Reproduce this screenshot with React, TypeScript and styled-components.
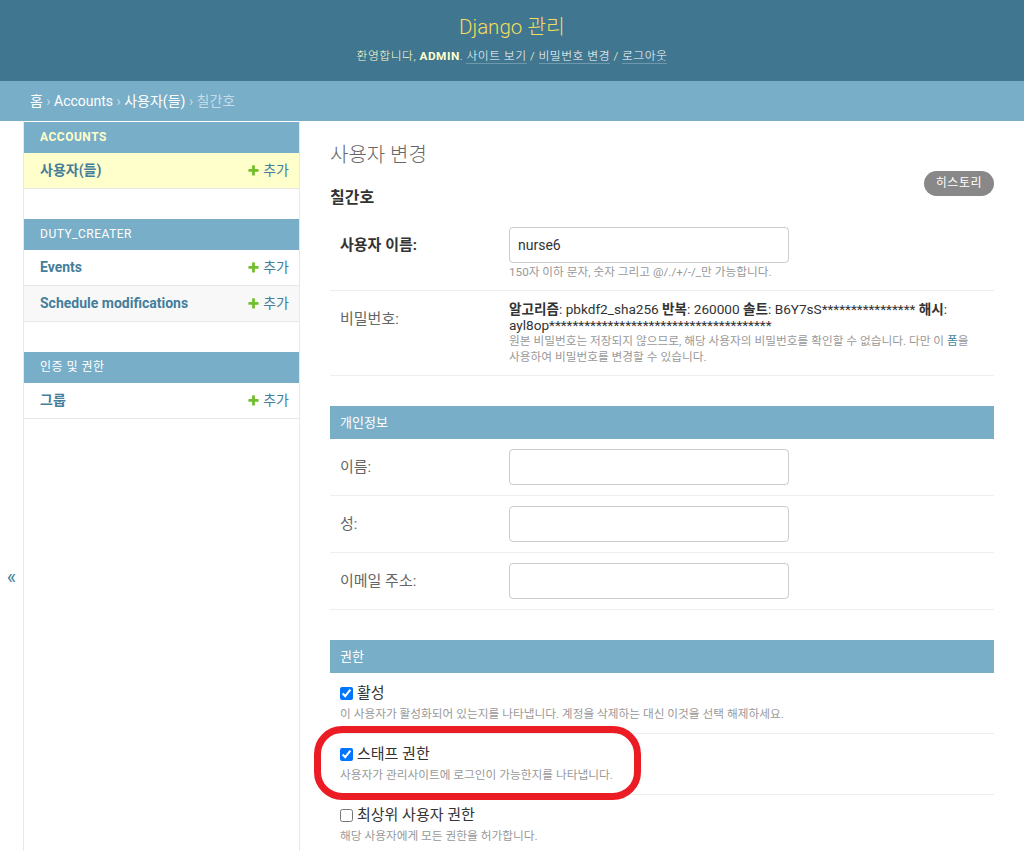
import React from "react";
import styled, { createGlobalStyle, css } from "styled-components";

const GlobalStyle = createGlobalStyle`
  * { box-sizing: border-box; }
  body {
    margin: 0;
    font-family: Roboto, "Noto Sans CJK KR", sans-serif;
    font-size: 14px;
    color: #333;
    background: #fff;
  }
  a { text-decoration: none; }
`;

const Header = styled.header`
  height: 81px;
  background: #417690;
  color: #ffc;
  text-align: center;
  padding: 13px 30px 0;
`;

const SiteName = styled.h1`
  margin: 0;
  height: 28px;
  font-size: 20.5px;
  font-weight: 300;
  line-height: 28px;
  color: #f5dd5d;
`;

const UserTools = styled.div`
  margin-top: 7px;
  height: 16px;
  font-size: 11.8px;
  font-weight: 300;
  line-height: 16px;
  letter-spacing: 0.5px;
  text-transform: uppercase;
  color: #ffc;
  strong { font-weight: 700; }
`;

const ToolLink = styled.a`
  color: #fff;
  border-bottom: 1px solid rgba(255, 255, 255, 0.25);
`;

const Breadcrumbs = styled.nav`
  height: 40px;
  background: #79aec8;
  padding: 10px 30px;
  color: #c4dce8;
  font-size: 14px;
  line-height: 20px;
  a { color: #fff; }
`;

const Main = styled.div`
  display: flex;
  align-items: stretch;
`;

const Toggle = styled.button`
  flex: 0 0 24px;
  display: flex;
  align-items: flex-start;
  justify-content: center;
  padding: 446px 0 0;
  border: 0;
  border-right: 1px solid #e8e8e8;
  background: #fff;
  color: #447e9b;
  font-size: 20px;
  line-height: 20px;
  font-family: Roboto, sans-serif;
`;

const Sidebar = styled.nav`
  flex: 0 0 276px;
  border-right: 1px solid #e8e8e8;
  padding-top: 1px;
`;

const Module = styled.div`
  margin-bottom: 30px;
`;

const Caption = styled.div<{ $current?: boolean }>`
  height: 31px;
  background: #79aec8;
  color: #fff;
  padding: 8px 16px;
  font-size: 12px;
  line-height: 15px;
  letter-spacing: 0.5px;
  text-transform: uppercase;
  ${(p) =>
    p.$current &&
    css`
      color: #ffc;
      font-weight: 700;
    `}
`;

const ModelRow = styled.div<{ $current?: boolean; $alt?: boolean }>`
  display: flex;
  align-items: center;
  justify-content: space-between;
  height: 36px;
  border-bottom: 1px solid #e8e8e8;
  background: ${(p) => (p.$current ? "#ffc" : p.$alt ? "#f8f8f8" : "#fff")};
`;

const ModelName = styled.a`
  padding: 0 16px;
  font-size: 14px;
  line-height: 19px;
  font-weight: 700;
  color: #447e9b;
`;

const AddLink = styled.a`
  display: flex;
  align-items: center;
  gap: 3px;
  padding: 0 10px 0 0;
  font-size: 14px;
  line-height: 19px;
  color: #447e9b;
  svg { flex: 0 0 13px; }
`;

const Content = styled.main`
  flex: 1;
  padding: 22px 30px 0;
  min-width: 0;
`;

const PageTitle = styled.h1`
  margin: 0 0 4px;
  font-size: 20px;
  font-weight: 300;
  line-height: 24px;
  color: #666;
`;

const TitleRow = styled.div`
  display: flex;
  align-items: flex-start;
  justify-content: space-between;
  height: 38px;
`;

const ObjectName = styled.h2`
  margin: 17px 0 0;
  font-size: 16px;
  font-weight: 700;
  line-height: 20px;
  color: #333;
`;

const HistoryButton = styled.a`
  display: block;
  height: 25px;
  padding: 5px 12px;
  background: #888;
  border-radius: 15px;
  color: #fff;
  font-size: 12px;
  line-height: 15px;
  letter-spacing: 0.5px;
`;

const Fieldset = styled.fieldset<{ $first?: boolean }>`
  margin: ${(p) => (p.$first ? "8px 0 0" : "30px 0 0")};
  padding: 0;
  border: 0;
  min-width: 0;
`;

const FieldsetTitle = styled.h2`
  margin: 0;
  height: 33px;
  background: #79aec8;
  color: #fff;
  padding: 8px 10px;
  font-size: 13px;
  font-weight: 400;
  line-height: 17px;
`;

const FormRow = styled.div`
  display: flex;
  padding: 10px;
  border-bottom: 1px solid #eee;
`;

const Label = styled.label<{ $required?: boolean }>`
  flex: 0 0 169px;
  padding-top: 10px;
  font-size: 15px;
  line-height: 16px;
  color: ${(p) => (p.$required ? "#333" : "#666")};
  font-weight: ${(p) => (p.$required ? 700 : 400)};
`;

const Field = styled.div`
  flex: 1;
  min-width: 0;
`;

const TextInput = styled.input`
  display: block;
  width: 280px;
  height: 36px;
  padding: 6px 8px;
  border: 1px solid #ccc;
  border-radius: 4px;
  font-family: Roboto, "Noto Sans CJK KR", sans-serif;
  font-size: 14px;
  color: #333;
  background: #fff;
`;

const Help = styled.div<{ $tight?: boolean }>`
  margin-top: ${(p) => (p.$tight ? "0" : "2px")};
  height: ${(p) => (p.$tight ? "32px" : "15px")};
  font-size: 11.7px;
  line-height: ${(p) => (p.$tight ? "16px" : "15px")};
  color: #999;
  word-break: keep-all;
  a { color: #447e9b; }
`;

const HashValue = styled.div`
  height: 32px;
  font-size: 13.6px;
  line-height: 16px;
  color: #333;
  strong { font-weight: 700; }
`;

const CheckRow = styled.div`
  padding: 10px;
  border-bottom: 1px solid #eee;
`;

const CheckLine = styled.div`
  display: flex;
  align-items: center;
  height: 20px;
`;

const Checkbox = styled.input`
  width: 13px;
  height: 13px;
  margin: 0 4px 0 0;
`;

const CheckLabel = styled.label`
  font-size: 15px;
  line-height: 20px;
  color: #333;
`;

const CheckHelp = styled.div`
  margin-top: 3px;
  height: 17px;
  font-size: 11.7px;
  line-height: 17px;
  color: #999;
`;

const Annotated = styled.div`
  position: relative;
`;

const Highlight = styled.div`
  position: absolute;
  left: -16px;
  top: -8px;
  width: 327px;
  height: 74px;
  border: 7px solid #ec1c24;
  border-radius: 28px;
  pointer-events: none;
`;

const PlusIcon = () => (
  <svg width="13" height="13" viewBox="0 0 1792 1792" aria-hidden="true">
    <path
      fill="#70bf2b"
      d="M1600 796v192q0 40-28 68t-68 28h-416v416q0 40-28 68t-68 28h-192q-40 0-68-28t-28-68v-416h-416q-40 0-68-28t-28-68v-192q0-40 28-68t68-28h416v-416q0-40 28-68t68-28h192q40 0 68 28t28 68v416h416q40 0 68 28t28 68z"
    />
  </svg>
);

type ModelItem = { name: string; current?: boolean };
type AppModule = { app: string; current?: boolean; models: ModelItem[] };

const apps: AppModule[] = [
  { app: "Accounts", current: true, models: [{ name: "사용자(들)", current: true }] },
  { app: "Duty_creater", models: [{ name: "Events" }, { name: "Schedule modifications" }] },
  { app: "인증 및 권한", models: [{ name: "그룹" }] },
];

const checks = [
  { label: "활성", help: "이 사용자가 활성화되어 있는지를 나타냅니다. 계정을 삭제하는 대신 이것을 선택 해제하세요.", checked: true },
  { label: "스태프 권한", help: "사용자가 관리사이트에 로그인이 가능한지를 나타냅니다.", checked: true, highlight: true },
  { label: "최상위 사용자 권한", help: "해당 사용자에게 모든 권한을 허가합니다.", checked: false },
];

export default function App() {
  return (
    <>
      <GlobalStyle />
      <Header>
        <SiteName>Django 관리</SiteName>
        <UserTools>
          환영합니다, <strong>admin</strong>. <ToolLink href="#">사이트 보기</ToolLink> /{" "}
          <ToolLink href="#">비밀번호 변경</ToolLink> / <ToolLink href="#">로그아웃</ToolLink>
        </UserTools>
      </Header>
      <Breadcrumbs>
        <a href="#">홈</a> › <a href="#">Accounts</a> › <a href="#">사용자(들)</a> › 칠간호
      </Breadcrumbs>
      <Main>
        <Toggle aria-label="사이드바 전환">«</Toggle>
        <Sidebar>
          {apps.map((a) => (
            <Module key={a.app}>
              <Caption $current={a.current}>{a.app}</Caption>
              {a.models.map((m, i) => (
                <ModelRow key={m.name} $current={m.current} $alt={i % 2 === 1}>
                  <ModelName href="#">{m.name}</ModelName>
                  <AddLink href="#">
                    <PlusIcon />
                    추가
                  </AddLink>
                </ModelRow>
              ))}
            </Module>
          ))}
        </Sidebar>
        <Content>
          <PageTitle>사용자 변경</PageTitle>
          <TitleRow>
            <ObjectName>칠간호</ObjectName>
            <HistoryButton href="#">히스토리</HistoryButton>
          </TitleRow>
          <form>
            <Fieldset $first>
              <FormRow>
                <Label $required htmlFor="id_username">사용자 이름:</Label>
                <Field>
                  <TextInput id="id_username" type="text" defaultValue="nurse6" />
                  <Help>150자 이하 문자, 숫자 그리고 @/./+/-/_만 가능합니다.</Help>
                </Field>
              </FormRow>
              <FormRow>
                <Label>비밀번호:</Label>
                <Field>
                  <HashValue>
                    <strong>알고리즘</strong>: pbkdf2_sha256 <strong>반복</strong>: 260000{" "}
                    <strong>솔트</strong>: B6Y7sS**************** <strong>해시</strong>:
                    ayl8op**************************************
                  </HashValue>
                  <Help $tight>
                    원본 비밀번호는 저장되지 않으므로, 해당 사용자의 비밀번호를 확인할 수 없습니다. 다만 이{" "}
                    <a href="#">폼</a>을 사용하여 비밀번호를 변경할 수 있습니다.
                  </Help>
                </Field>
              </FormRow>
            </Fieldset>
            <Fieldset>
              <FieldsetTitle>개인정보</FieldsetTitle>
              {[
                ["id_first_name", "이름:"],
                ["id_last_name", "성:"],
                ["id_email", "이메일 주소:"],
              ].map(([id, label]) => (
                <FormRow key={id}>
                  <Label htmlFor={id}>{label}</Label>
                  <Field>
                    <TextInput id={id} type="text" />
                  </Field>
                </FormRow>
              ))}
            </Fieldset>
            <Fieldset>
              <FieldsetTitle>권한</FieldsetTitle>
              {checks.map((c) => {
                const row = (
                  <CheckRow>
                    <CheckLine>
                      <Checkbox type="checkbox" defaultChecked={c.checked} id={c.label} />
                      <CheckLabel htmlFor={c.label}>{c.label}</CheckLabel>
                    </CheckLine>
                    <CheckHelp>{c.help}</CheckHelp>
                  </CheckRow>
                );
                return c.highlight ? (
                  <Annotated key={c.label}>
                    {row}
                    <Highlight />
                  </Annotated>
                ) : (
                  <React.Fragment key={c.label}>{row}</React.Fragment>
                );
              })}
            </Fieldset>
          </form>
        </Content>
      </Main>
    </>
  );
}
